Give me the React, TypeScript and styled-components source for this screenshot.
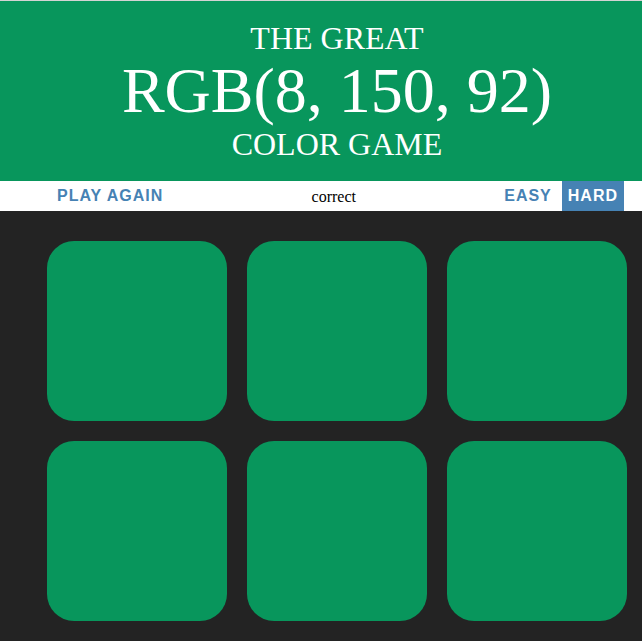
import { useState } from "react";
import styled, { createGlobalStyle, css } from "styled-components";

const GlobalStyle = createGlobalStyle`
  html, body {
    margin: 0;
    padding: 0;
    background: #232323;
    font-family: "Liberation Serif", "Times New Roman", serif;
  }
`;

const target = "rgb(8, 150, 92)";
const colors = [target, target, target, target, target, target];

export default function App() {
  const [mode, setMode] = useState<"easy" | "hard">("hard");

  return (
    <Page>
      <GlobalStyle />
      <Title bg={target}>
        The Great
        <br />
        <ColorDisplay>{target}</ColorDisplay>
        <br />
        Color Game
      </Title>
      <Stripe>
        <StripeButton>Play Again</StripeButton>
        <Message>correct</Message>
        <Modes>
          <StripeButton selected={mode === "easy"} onClick={() => setMode("easy")}>
            Easy
          </StripeButton>
          <StripeButton selected={mode === "hard"} onClick={() => setMode("hard")}>
            Hard
          </StripeButton>
        </Modes>
      </Stripe>
      <Board>
        {colors.map((c, i) => (
          <Square key={i} style={{ background: c }} />
        ))}
      </Board>
    </Page>
  );
}

const Page = styled.div`
  border-top: 1px solid #d4d4d4;
  min-height: 640px;
`;

const Title = styled.h1<{ bg: string }>`
  margin: 0;
  height: 180px;
  box-sizing: border-box;
  padding: 20px 0 19px 32px;
  background: ${(p) => p.bg};
  color: white;
  text-align: center;
  text-transform: uppercase;
  font-weight: normal;
  font-size: 32px;
  line-height: 1.1;
  overflow: hidden;
`;

const ColorDisplay = styled.span`
  font-size: 200%;
`;

const Stripe = styled.div`
  display: flex;
  align-items: stretch;
  height: 30px;
  padding: 0 18px 0 51px;
  background: white;
  color: black;
`;

const Message = styled.span`
  flex: 1;
  display: flex;
  align-items: center;
  justify-content: center;
  padding-top: 2px;
  font-size: 16px;
`;

const Modes = styled.div`
  display: flex;
  gap: 4px;
`;

const StripeButton = styled.button<{ selected?: boolean }>`
  height: 100%;
  padding: 1px 6px;
  border: none;
  background: none;
  outline: none;
  font-family: "Liberation Sans", Arial, sans-serif;
  font-size: 16px;
  font-weight: 700;
  letter-spacing: 1px;
  text-transform: uppercase;
  color: steelblue;
  cursor: pointer;
  transition: all 0.3s;

  ${(p) =>
    p.selected &&
    css`
      color: white;
      background: steelblue;
    `}
`;

const Board = styled.div`
  display: grid;
  grid-template-columns: repeat(3, 180px);
  grid-auto-rows: 180px;
  gap: 20px;
  padding: 30px 15px 20px 47px;
`;

const Square = styled.div`
  border-radius: 15%;
`;
